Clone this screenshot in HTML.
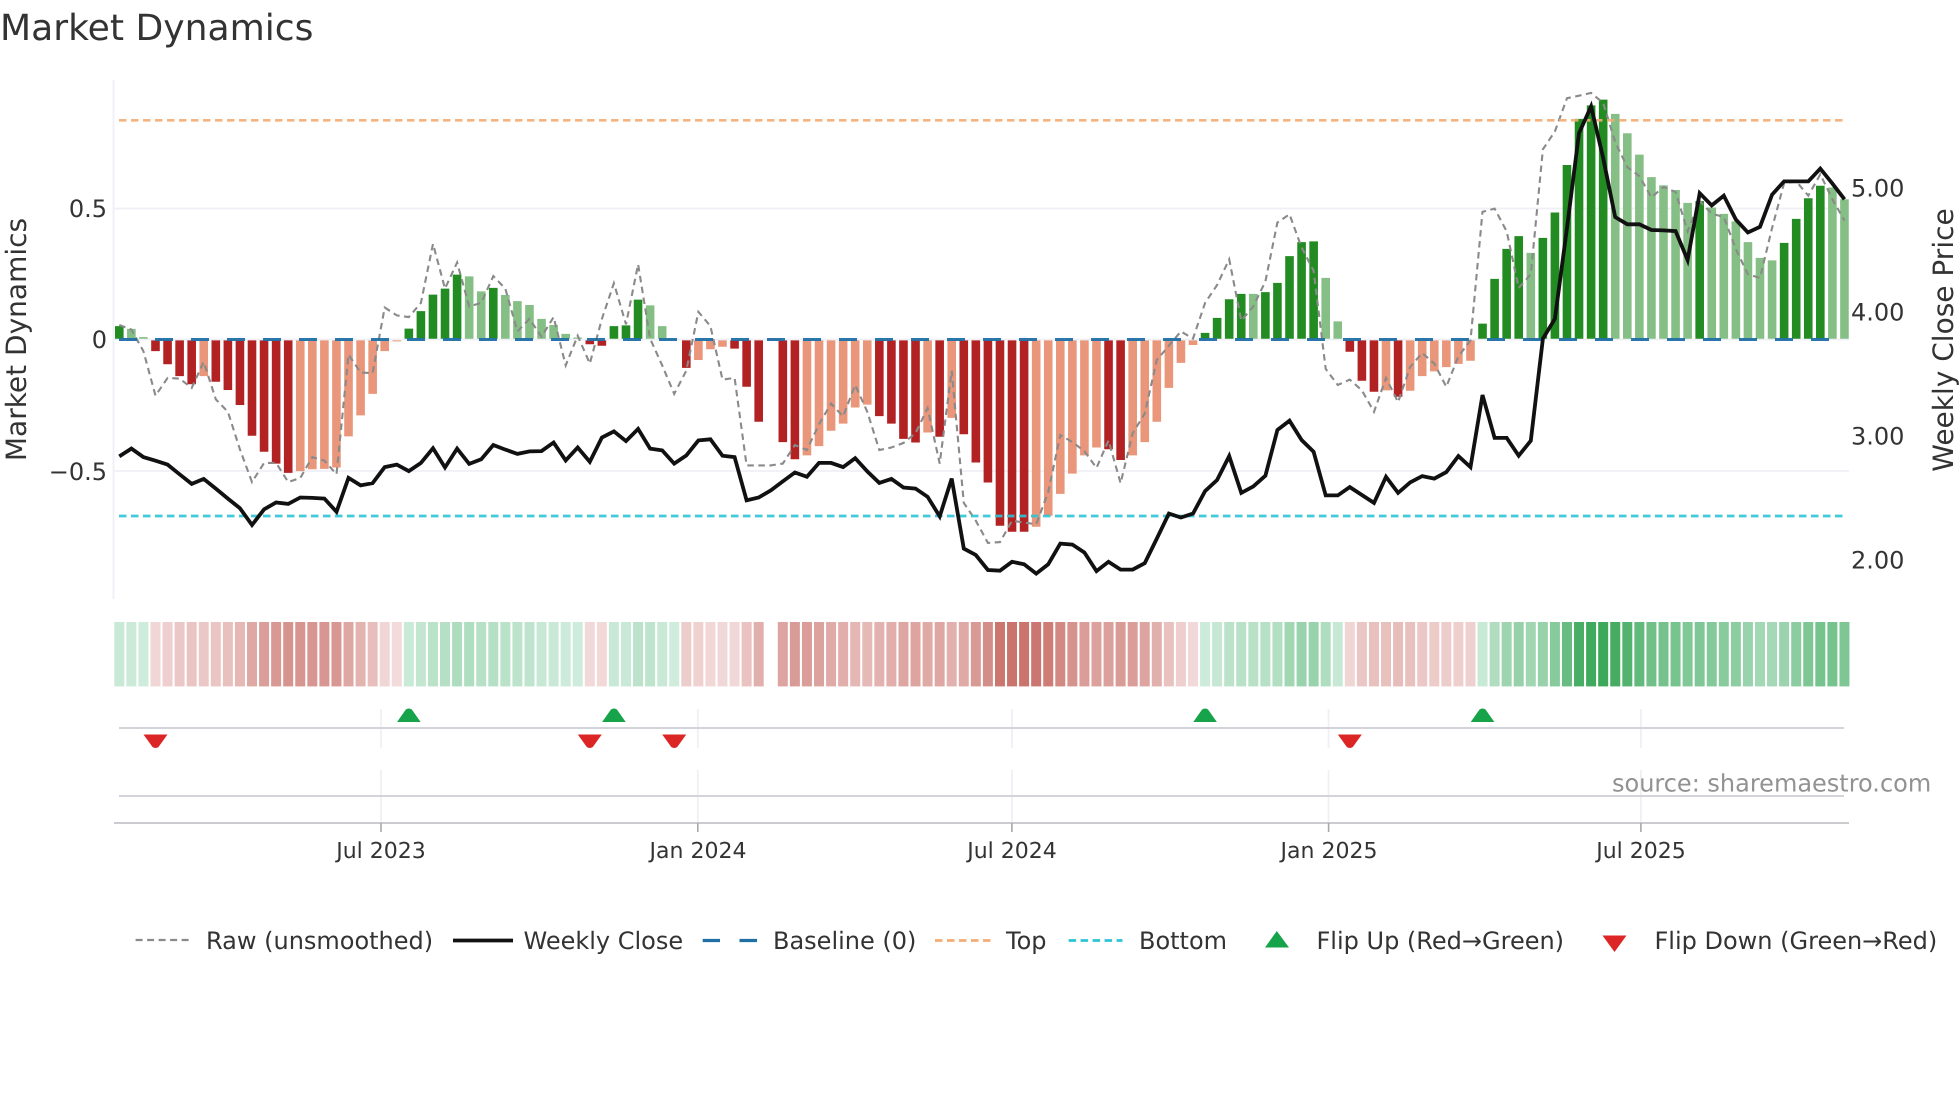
<!DOCTYPE html>
<html lang="en">
<head>
<meta charset="utf-8">
<title>Market Dynamics</title>
<style>
html,body{margin:0;padding:0;background:#fff;width:1960px;height:1102px;overflow:hidden}
svg{display:block}
text{font-family:"DejaVu Sans","Liberation Sans",sans-serif;fill:#333;text-rendering:geometricPrecision}
</style>
</head>
<body>
<svg id="c" xmlns="http://www.w3.org/2000/svg" width="1960" height="1102" viewBox="0 0 1960 1102">
<rect width="1960" height="1102" fill="#fff"/>
<g id="grid" stroke="#eff0f6" stroke-width="1.8" fill="none">
<path d="M113.5 80V599"/>
<path d="M113 208.5H1849M113 339.5H1849M113 471H1849"/>
<path d="M381 709V748M381 770V823M697.8 709V748M697.8 770V823M1011.9 709V748M1011.9 770V823M1328.6 709V748M1328.6 770V823M1640.9 709V748M1640.9 770V823"/>
</g>
<g id="heat"></g>
<g id="bars"></g>
<path id="raw" fill="none" stroke="#8a8a8a" stroke-width="2.1" stroke-dasharray="6.5 4.5"/>
<path d="M119 339.5H1844" stroke="#1f6fa5" stroke-width="3" stroke-dasharray="18 18" fill="none" opacity=".95"/>
<path d="M119 120.3H1844" stroke="#f2ac74" stroke-width="2.7" stroke-dasharray="7.5 4.5" fill="none" opacity=".9"/>
<path d="M119 516H1844" stroke="#2cc4d6" stroke-width="2.7" stroke-dasharray="7.5 4.5" fill="none" opacity=".9"/>
<path id="close" fill="none" stroke="#111" stroke-width="3.8" stroke-linejoin="miter"/>

<g stroke="#d3d4d9" stroke-width="2" fill="none">
<path d="M119 728H1844M119 796H1844"/>
</g>
<path d="M114 823H1849" stroke="#cbcbd0" stroke-width="2" fill="none"/>
<path d="M381 823V832M697.8 823V832M1011.9 823V832M1328.6 823V832M1640.9 823V832" stroke="#a8a8a8" stroke-width="1.6" fill="none"/>
<g id="marks"></g>

<text x="0" y="40" font-size="36.1">Market Dynamics</text>
<text x="107" y="217" font-size="24" text-anchor="end">0.5</text>
<text x="107" y="348" font-size="24" text-anchor="end">0</text>
<text x="107" y="480" font-size="24" text-anchor="end">−0.5</text>
<text x="1851" y="196.5" font-size="24">5.00</text>
<text x="1851" y="320.5" font-size="24">4.00</text>
<text x="1851" y="444.5" font-size="24">3.00</text>
<text x="1851" y="568.5" font-size="24">2.00</text>
<text transform="translate(26 339.5) rotate(-90)" font-size="28" text-anchor="middle">Market Dynamics</text>
<text transform="translate(1953 340) rotate(-90)" font-size="28" text-anchor="middle">Weekly Close Price</text>
<g font-size="22" text-anchor="middle">
<text x="381" y="858">Jul 2023</text>
<text x="698" y="858">Jan 2024</text>
<text x="1012" y="858">Jul 2024</text>
<text x="1329" y="858">Jan 2025</text>
<text x="1641" y="858">Jul 2025</text>
</g>
<text x="1612" y="791.5" font-size="24" style="fill:#929292">source: sharemaestro.com</text>

<path d="M135.6 940H190.7" stroke="#8a8a8a" stroke-width="2.2" stroke-dasharray="7 4.5" fill="none"/>
<path d="M453 940.5H513" stroke="#111" stroke-width="3.8" fill="none"/>
<path d="M702.7 940.5H720M739.5 940.5H757" stroke="#1f6fa5" stroke-width="3.2" fill="none"/>
<path d="M935 940.5H991" stroke="#f2ac74" stroke-width="2.7" stroke-dasharray="7.5 4.5" fill="none"/>
<path d="M1068.6 940.5H1122.5" stroke="#2cc4d6" stroke-width="2.7" stroke-dasharray="7.5 4.5" fill="none"/>
<path d="M1276.8 931L1265 947.5H1289Z" fill="#16a34a"/>
<path d="M1602.5 935.5H1626.5L1614.5 952Z" fill="#dc2626"/>
<g font-size="24">
<text x="206" y="949">Raw (unsmoothed)</text>
<text x="523.5" y="949">Weekly Close</text>
<text x="773" y="949">Baseline (0)</text>
<text x="1006" y="949">Top</text>
<text x="1139" y="949">Bottom</text>
<text x="1316.5" y="949">Flip Up (Red→Green)</text>
<text x="1654.5" y="949">Flip Down (Green→Red)</text>
</g>
</svg>
<script>
(function(){
var B="745G 753g 776g 815R 852R 885R 908R 885r 901R 924R 966R 1052R 1097R 1130R 1156R 1151r 1146r 1145r 1141r 1054r 995r 935r 815r 788r 752G 703G 657G 640G 601G 606g 648g 638G 658g 675g 686g 725g 742g 767g 777g 796R 800R 745G 743G 671G 687g 745g 780g 862R 840r 810r 803r 808R 915R 1013R 0x 1070R 1118R 1107r 1081r 1038r 1018r 973r 965r 997R 1018R 1061R 1071R 1043r 1055R 1002r 1048R 1127R 1183R 1304R 1321R 1321R 1307r 1276r 1215r 1158r 1107r 1085r 1090R 1120R 1107r 1070r 1013r 918r 848r 798r 764G 722G 670G 655G 655g 650G 624G 549G 510G 508G 610g 732g 817R 898R 929R 925r 943R 926r 885r 872r 860r 851r 842r 738G 613G 529G 493G 540g 498G 427G 294G 165G 127G 111G 151g 205g 265g 328g 351g 364g 400g 395G 413g 431g 452g 510g 554g 561g 512G 445G 387G 352G 357g 390g".split(" ");
var C=[1110,1088,1112,1122,1133,1160,1187,1173,1200,1228,1255,1302,1258,1239,1243,1225,1226,1228,1265,1170,1191,1185,1140,1133,1151,1128,1087,1141,1088,1131,1118,1078,1091,1103,1096,1095,1071,1121,1085,1125,1057,1040,1067,1033,1088,1093,1130,1107,1065,1062,1108,1112,1233,1225,1205,1180,1155,1167,1128,1128,1140,1115,1152,1184,1173,1197,1200,1223,1278,1172,1368,1386,1428,1430,1405,1412,1438,1412,1354,1357,1379,1431,1405,1427,1427,1409,1340,1270,1281,1270,1207,1176,1109,1212,1194,1164,1036,1010,1064,1097,1219,1219,1196,1218,1240,1167,1212,1183,1165,1172,1154,1109,1140,938,1058,1058,1108,1066,780,725,470,205,130,275,440,460,460,476,477,479,560,373,407,380,447,483,467,377,340,340,340,304,346,390];
var R=[742,755,815,940,890,892,918,845,950,985,1090,1182,1128,1128,1182,1170,1112,1122,1160,825,875,877,693,715,720,680,515,640,567,690,680,605,640,760,725,775,720,855,772,850,725,625,740,572,780,855,935,870,705,745,895,890,1135,1135,1135,1130,1078,1092,1020,962,998,910,985,1092,1085,1072,1045,975,1130,870,1240,1290,1352,1350,1290,1295,1300,1210,1050,1070,1095,1142,1065,1185,1045,990,840,800,760,780,680,630,558,730,690,620,455,432,525,590,865,910,895,925,985,890,958,860,820,850,915,830,785,425,416,480,638,600,250,200,107,100,92,120,230,300,325,385,355,370,480,395,430,440,530,600,610,470,345,340,380,320,390,450];
var P=12.064,X0=119.3,NS="http://www.w3.org/2000/svg";
function Y(z){return 60+z/2.8}
function XI(i){return X0+P*i}
function el(n,a,p){var e=document.createElementNS(NS,n);for(var k in a)e.setAttribute(k,a[k]);p.appendChild(e);return e}
var col={G:"#228b22",g:"#85bf85",R:"#b22222",r:"#e9967a"};
var bars=document.getElementById("bars"),heat=document.getElementById("heat");
var d={G:"",g:"",R:"",r:""};
B.forEach(function(s,i){
  var t=s.slice(-1),z=parseInt(s,10);
  if(t==="x")return;
  var x=(XI(i)-4.3).toFixed(2),y=Y(z),h;
  if(t==="G"||t==="g"){h=338.8-y;d[t]+="M"+x+" "+y.toFixed(2)+"h8.6v"+h.toFixed(2)+"h-8.6z";}
  else{h=y-340.4;d[t]+="M"+x+" 340.4h8.6v"+h.toFixed(2)+"h-8.6z";}
  var m=Math.abs(z-782)/2.8,c,f;
  if(t==="G"||t==="g"){f=Math.pow(Math.min(1,m/239),1.12);c=[207-147*f,236-68*f,220-130*f];}
  else{f=Math.min(1,m/192);c=[243-41*f,220-104*f,220-111*f];}
  el("rect",{x:(114.3+P*i).toFixed(2),y:622,width:10,height:64.4,fill:"rgb("+c.map(Math.round).join(",")+")"},heat);
});
for(var k in d)el("path",{d:d[k],fill:col[k]},bars);
function line(a){return a.map(function(z,i){return (i?"L":"M")+XI(i).toFixed(1)+" "+Y(z).toFixed(1)}).join("")}
document.getElementById("close").setAttribute("d",line(C));
document.getElementById("raw").setAttribute("d",line(R));
var m=document.getElementById("marks");
[24,41,90,113].forEach(function(i){var x=XI(i);
  el("path",{d:"M"+(x-3)+" 709.5Q"+x+" 707.5 "+(x+3)+" 709.5L"+(x+11.8)+" 722H"+(x-11.8)+"Z",fill:"#16a34a"},m);});
[3,39,46,102].forEach(function(i){var x=XI(i);
  el("path",{d:"M"+(x-12)+" 734.5H"+(x+12)+"L"+(x+3)+" 747Q"+x+" 749 "+(x-3)+" 747Z",fill:"#dc2626"},m);});
})();
</script>
</body>
</html>
